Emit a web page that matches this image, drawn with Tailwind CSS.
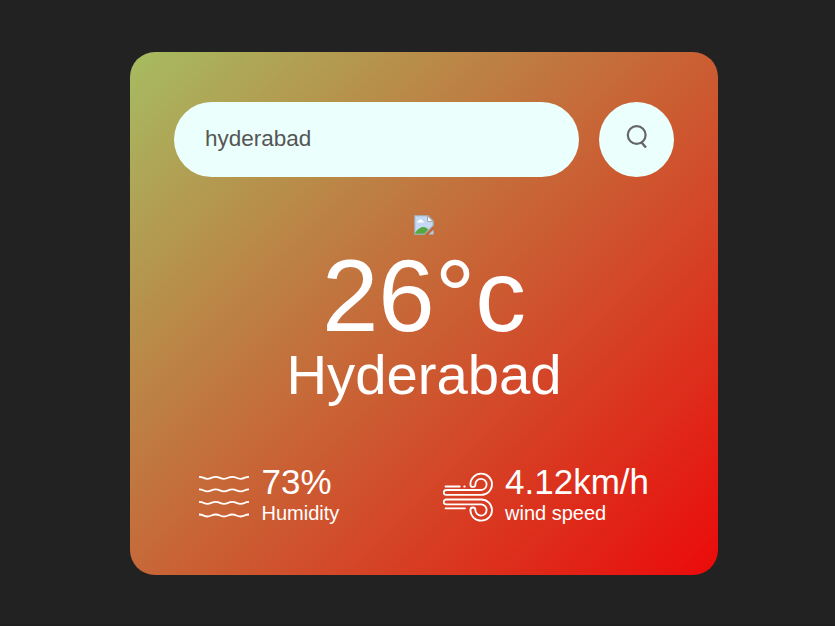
<!DOCTYPE html>
<html lang="en">
<head>
<meta charset="utf-8">
<title>Weather</title>
<script src="https://cdn.jsdelivr.net/npm/@tailwindcss/browser@4"></script>
</head>
<body class="h-[626px] overflow-hidden border-b-2 border-[#1f1f1f] bg-[#222] font-['Liberation_Sans',Arial,sans-serif] text-white">
<main class="ml-[130px] mt-[52px] h-[523px] w-[588px] rounded-[25px] bg-linear-[135deg,#a6bc61,#eb0a0a] px-[44px] pt-[50px] text-center">
  <div class="flex items-center justify-between">
    <input type="text" value="hyderabad" class="h-[75px] w-[405px] rounded-full bg-[#ebfffc] px-[31px] pb-[2px] text-[22.5px] text-[#555] outline-none">
    <button aria-label="Search" class="flex size-[75px] items-start justify-center rounded-full bg-[#ebfffc] pt-[22px]">
      <svg class="ml-[1px] size-[24px]" viewBox="0 0 24 24" fill="none" stroke="#666" stroke-width="2.2"><circle cx="11.7" cy="11" r="8.9"/><path d="M16.2 18 L20.9 23.6" stroke-width="2.4"/></svg>
    </button>
  </div>
  <div class="mt-[38px]">
    <svg class="mx-auto h-[20px] w-[20px]" viewBox="0 0 20 20">
      <path d="M.7.7H14L19.3 6V10.5L10.5 19.3H.7Z" fill="#c5d9f5" stroke="#a3a8aa" stroke-width="1.2"/>
      <path d="M3 7.5Q3 5.8 4.7 5.7Q5.4 3.7 7.2 4.5Q8.5 4.6 8.6 6Q10 6.3 10 7.5Z" fill="#fff"/>
      <path d="M1.3 17.5Q5 11.8 10 12Q12.3 12.2 14.2 14.5L10.5 18.7H1.3Z" fill="#53a93f"/>
      <path d="M13.5 1V6.5H19Z" fill="#fff" stroke="#a3a8aa"/>
      <path d="M11 20L20 11V14L14 20Z" fill="#c76538"/>
      <path d="M19.3 15V19.3H15Z" fill="#c5d9f5" stroke="#a3a8aa"/>
    </svg>
    <h1 class="mt-[15px] h-[93px] text-[101.5px] leading-[93px]">26°c</h1>
    <h2 class="h-[64px] text-[56.25px] leading-[64px]">Hyderabad</h2>
  </div>
  <div class="mt-[55px] flex justify-between pl-[25px] pr-[25px] text-left">
    <div class="flex">
      <svg class="mt-[10px] mr-[12.5px] size-[50px]" viewBox="0 0 50 50" fill="none" stroke="#fff" stroke-width="1.8">
        <path d="M0 4.8C5 4.8 4.5 6.8 8.3 6.8S12.5 4.8 16.7 4.8S21 6.8 25 6.8S29.2 4.8 33.3 4.8S37.5 6.8 41.7 6.8S45 4.8 50 4.8"/>
        <path d="M0 17.4C5 17.4 4.5 19.4 8.3 19.4S12.5 17.4 16.7 17.4S21 19.4 25 19.4S29.2 17.4 33.3 17.4S37.5 19.4 41.7 19.4S45 17.4 50 17.4"/>
        <path d="M0 29.9C5 29.9 4.5 31.9 8.3 31.9S12.5 29.9 16.7 29.9S21 31.9 25 31.9S29.2 29.9 33.3 29.9S37.5 31.9 41.7 31.9S45 29.9 50 29.9"/>
        <path d="M0 42.5C5 42.5 4.5 44.5 8.3 44.5S12.5 42.5 16.7 42.5S21 44.5 25 44.5S29.2 42.5 33.3 42.5S37.5 44.5 41.7 44.5S45 42.5 50 42.5"/>
      </svg>
      <div>
        <p class="h-[40px] text-[35px] leading-[40px]">73%</p>
        <p class="h-[23px] text-[20px] leading-[23px]">Humidity</p>
      </div>
    </div>
    <div class="flex">
      <svg class="mt-[10px] mr-[12px] size-[50px]" viewBox="0 0 50 50" fill="none" stroke="#fff" stroke-width="1.8" stroke-linecap="round" stroke-linejoin="round">
        <path d="M2.5 14.5H16.8M21.2 14.5H21.8M2.5 36.3H22"/>
        <path d="M27.4 12.4A10.8 10.6 0 1 1 38.2 22.9H3.2A2.45 2.45 0 0 1 3.2 18H38.2A5.6 5.6 0 1 0 32.4 12.4A2.5 2.5 0 0 1 27.4 12.4Z"/>
        <path d="M27.4 38A10.8 10.6 0 1 0 38.2 27.5H3.2A2.45 2.45 0 0 0 3.2 32.4H38.2A5.6 5.6 0 1 1 32.4 38A2.5 2.5 0 0 0 27.4 38Z"/>
      </svg>
      <div>
        <p class="h-[40px] text-[35px] leading-[40px]">4.12km/h</p>
        <p class="h-[23px] text-[20px] leading-[23px]">wind speed</p>
      </div>
    </div>
  </div>
</main>
</body>
</html>
